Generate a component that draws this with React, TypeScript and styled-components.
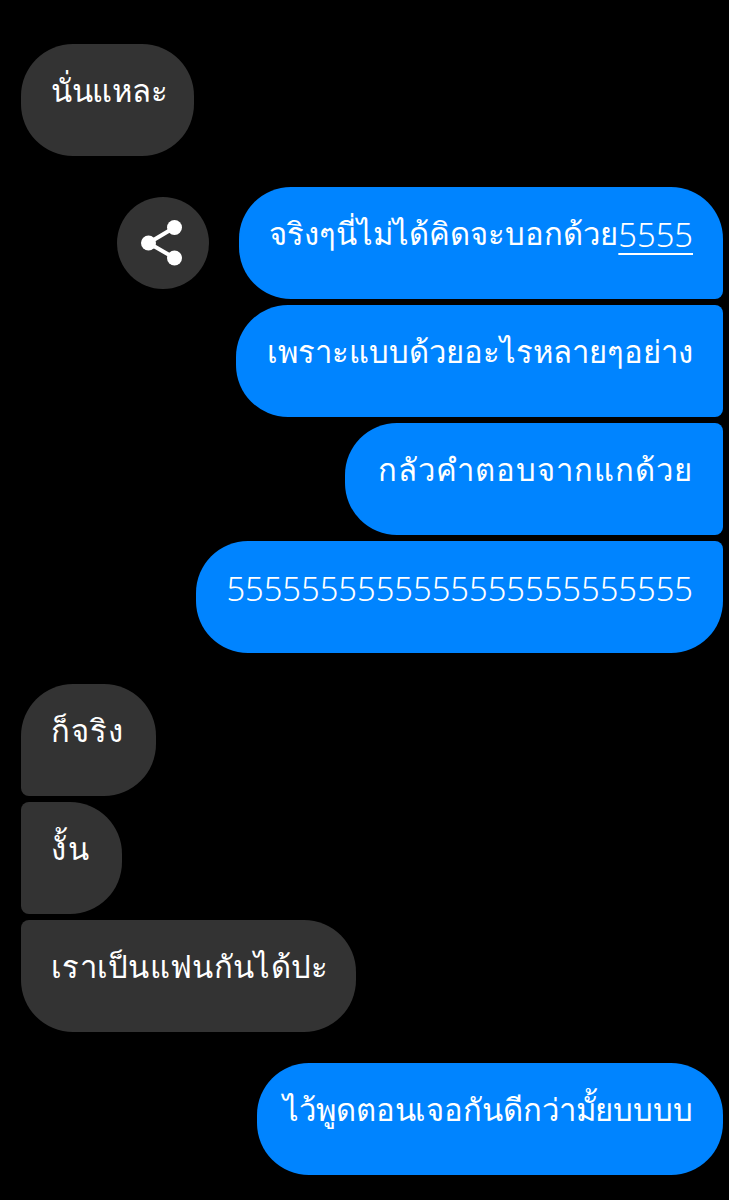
import styled, { createGlobalStyle } from 'styled-components';

const GlobalStyle = createGlobalStyle`
  html, body {
    margin: 0;
    padding: 0;
    background: #000;
  }
`;

const Thread = styled.div`
  width: 729px;
  height: 1200px;
  box-sizing: border-box;
  padding: 44px 6px 0 21px;
  display: flex;
  flex-direction: column;
  gap: 30.6px;
  overflow: hidden;
  font-family: "Noto Sans", "Liberation Sans", sans-serif;
`;

const Group = styled.div`
  display: flex;
  flex-direction: column;
  gap: 5.6px;
`;

const Row = styled.div<{ $mine?: boolean }>`
  display: flex;
  align-items: center;
  justify-content: ${(p) => (p.$mine ? 'flex-end' : 'flex-start')};
  gap: 30px;
`;

const Bubble = styled.div<{ $mine?: boolean; $corners: string; $width: number; $track?: number }>`
  box-sizing: border-box;
  width: ${(p) => p.$width}px;
  height: 112.4px;
  padding: 0 30px 18px;
  display: flex;
  align-items: center;
  justify-content: ${(p) => (p.$mine ? 'flex-end' : 'flex-start')};
  white-space: nowrap;
  font-size: 31px;
  font-weight: 300;
  letter-spacing: ${(p) => p.$track ?? 0}px;
  color: #fff;
  background: ${(p) => (p.$mine ? '#0084ff' : '#333333')};
  border-radius: ${(p) => p.$corners};
`;

const Digits = styled.span<{ $link?: boolean }>`
  font-size: 32.7px;
  font-weight: 300;
  letter-spacing: 0;
  text-decoration: ${(p) => (p.$link ? 'underline' : 'none')};
  text-underline-offset: 6px;
  text-decoration-thickness: 1.5px;
`;

const ShareButton = styled.div`
  width: 92px;
  height: 92px;
  border-radius: 50%;
  background: #333333;
  display: flex;
  align-items: center;
  justify-content: center;
`;

const ShareIcon = () => (
  <svg width="46" height="46" viewBox="0 0 46 46" fill="#fff">
    <circle cx="34.5" cy="7.5" r="7.5" />
    <circle cx="8.5" cy="23" r="7.5" />
    <circle cx="34.5" cy="38" r="7.5" />
    <path d="M8.5 23 34.5 7.5M8.5 23 34.5 38" stroke="#fff" strokeWidth="4" />
  </svg>
);

const ALL = '52px';

export default function App() {
  return (
    <>
      <GlobalStyle />
      <Thread>
        <Group>
          <Row>
            <Bubble $width={173} $corners={ALL} $track={-0.3}>นั่นแหละ</Bubble>
          </Row>
        </Group>

        <Group>
          <Row $mine>
            <ShareButton>
              <ShareIcon />
            </ShareButton>
            <Bubble $mine $width={484} $corners="52px 52px 8px 52px">
              จริงๆนี่ไม่ได้คิดจะบอกด้วย<Digits $link>5555</Digits>
            </Bubble>
          </Row>
          <Row $mine>
            <Bubble $mine $width={487} $corners="52px 8px 8px 52px">เพราะแบบด้วยอะไรหลายๆอย่าง</Bubble>
          </Row>
          <Row $mine>
            <Bubble $mine $width={378} $corners="52px 8px 8px 52px" $track={1}>กลัวคำตอบจากแกด้วย</Bubble>
          </Row>
          <Row $mine>
            <Bubble $mine $width={527} $corners="52px 8px 52px 52px">
              <Digits>5555555555555555555555555</Digits>
            </Bubble>
          </Row>
        </Group>

        <Group>
          <Row>
            <Bubble $width={135} $corners="52px 52px 52px 8px" $track={1}>ก็จริง</Bubble>
          </Row>
          <Row>
            <Bubble $width={101} $corners="8px 52px 52px 8px" $track={1.5}>งั้น</Bubble>
          </Row>
          <Row>
            <Bubble $width={335} $corners="8px 52px 52px 52px" $track={0.3}>เราเป็นแฟนกันได้ปะ</Bubble>
          </Row>
        </Group>

        <Group>
          <Row $mine>
            <Bubble $mine $width={466} $corners={ALL} $track={-0.1}>ไว้พูดตอนเจอกันดีกว่ามั้ยบบบบ</Bubble>
          </Row>
        </Group>
      </Thread>
    </>
  );
}
